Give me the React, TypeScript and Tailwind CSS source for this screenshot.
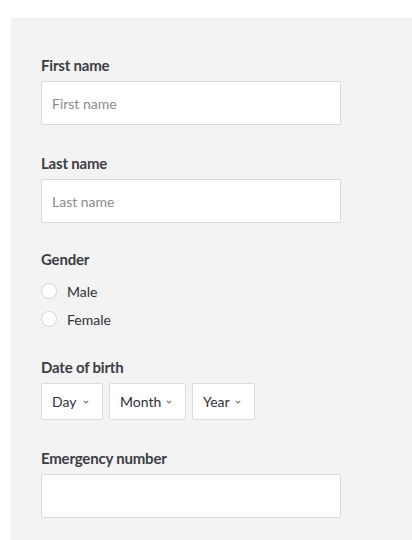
import React from "react";

const font = { fontFamily: "Lato, 'Noto Sans', sans-serif" };

function Label({ children }: { children: React.ReactNode }) {
  return (
    <label className="block text-[15px] leading-5 font-bold text-[#3b3e45] mb-[6px] tracking-[-0.2px]">
      {children}
    </label>
  );
}

function Chevron() {
  return (
    <svg width="6" height="4" viewBox="0 0 6 4" className="text-[#777]">
      <polyline points="0.8,0.8 3,3 5.2,0.8" fill="none" stroke="currentColor" strokeWidth="1.1" />
    </svg>
  );
}

const selects = [
  { label: "Day", w: "w-[62px]" },
  { label: "Month", w: "w-[77px]" },
  { label: "Year", w: "w-[63px]" },
];

export default function App() {
  return (
    <div className="bg-white min-h-[540px] pt-[18px] pl-[11px]" style={font}>
      <div className="bg-[#f3f3f3] min-h-[522px] pt-[37px] pl-[30px] pb-6">
        {/* First name */}
        <div>
          <Label>First name</Label>
          <input
            placeholder="First name"
            className="w-[300px] h-[44px] bg-white border border-[#d9d9d9] rounded-[2px] pl-[10px] text-[14px] text-[#333] placeholder:text-[#8c8c8c] outline-none"
          />
        </div>

        {/* Last name */}
        <div className="mt-7">
          <Label>Last name</Label>
          <input
            placeholder="Last name"
            className="w-[300px] h-[44px] bg-white border border-[#d9d9d9] rounded-[2px] pl-[10px] text-[14px] text-[#333] placeholder:text-[#8c8c8c] outline-none"
          />
        </div>

        {/* Gender */}
        <div className="mt-[26px]">
          <Label>Gender</Label>
          <div className="pt-[2px]">
            {["Male", "Female"].map((g) => (
              <div key={g} className="flex items-center h-7">
                <span className="w-4 h-4 rounded-full bg-white border border-[#d4d7dc]" />
                <span className="ml-[10px] text-[14px] text-[#2f3137]">{g}</span>
              </div>
            ))}
          </div>
        </div>

        {/* Date of birth */}
        <div className="mt-6">
          <Label>Date of birth</Label>
          <div className="flex gap-[6px] mt-px">
            {selects.map((s) => (
              <div
                key={s.label}
                className={`${s.w} h-[37px] bg-white border border-[#dcdcdc] rounded-[2px] flex items-center justify-between pl-[10px] pr-[13px] text-[14px] text-[#2f3137]`}
              >
                <span>{s.label}</span>
                <Chevron />
              </div>
            ))}
          </div>
        </div>

        {/* Emergency number */}
        <div className="mt-[28px]">
          <Label>Emergency number</Label>
          <input className="w-[300px] h-[44px] bg-white border border-[#d9d9d9] rounded-[2px] pl-[10px] text-[14px] text-[#333] outline-none" />
        </div>
      </div>
    </div>
  );
}
